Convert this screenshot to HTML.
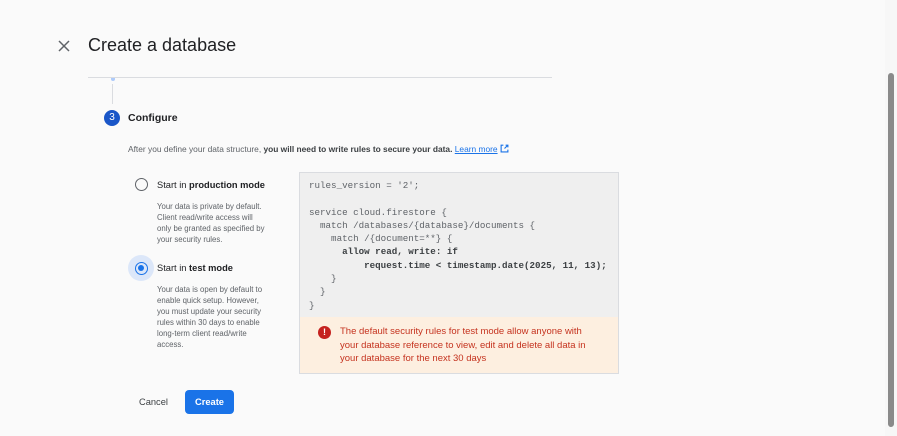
<!DOCTYPE html>
<html><head><style>
*{margin:0;padding:0;box-sizing:border-box}
body{width:897px;height:436px;background:#fafafa;font-family:"Liberation Sans",sans-serif;position:relative;overflow:hidden;color:#202124}
.abs{position:absolute}
.mono{font-family:"Liberation Mono",monospace}
</style></head><body>
<div class="abs" style="left:885px;top:0;width:12px;height:436px;background:#f7f7f7"></div>
<div class="abs" style="left:888px;top:73px;width:6px;height:354px;background:#8a8a8a;border-radius:3px"></div>
<svg class="abs" style="left:58px;top:40px" width="12" height="12" viewBox="0 0 12 12"><path d="M1 1L11 11M11 1L1 11" stroke="#5f6368" stroke-width="1.5"/></svg>
<div class="abs" style="left:88px;top:35px;font-size:18px;color:#202124">Create a database</div>
<div class="abs" style="left:88px;top:77px;width:464px;height:1px;background:#dadce0"></div>
<div class="abs" style="left:111px;top:78px;width:4px;height:3px;background:#aecbfa;border-radius:0 0 2px 2px"></div>
<div class="abs" style="left:112px;top:84px;width:1px;height:20px;background:#dadce0"></div>
<div class="abs" style="left:104px;top:110px;width:16px;height:16px;border-radius:50%;background:#1a56c8;color:#fff;font-size:10px;text-align:center;line-height:16px">3</div>
<div class="abs" style="left:128px;top:112px;font-size:10.5px;font-weight:bold">Configure</div>
<div class="abs" style="left:128px;top:144px;font-size:8.4px;color:#5f6368;white-space:nowrap">After you define your data structure, <b style="color:#3c4043">you will need to write rules to secure your data.</b> <span style="color:#1a73e8;text-decoration:underline">Learn more</span> <svg width="9" height="9" viewBox="0 0 8 8" style="vertical-align:-1px"><path d="M3 1H1V7H7V5M4 4L7 1M5 1H7V3" fill="none" stroke="#1a73e8" stroke-width="1"/></svg></div>
<div class="abs" style="left:135px;top:178px;width:13px;height:13px;border:1.5px solid #5f6368;border-radius:50%"></div>
<div class="abs" style="left:157px;top:180px;font-size:9.3px">Start in <b>production mode</b></div>
<div class="abs" style="left:157px;top:201px;font-size:7.8px;color:#5f6368;line-height:11px;width:112px">Your data is private by default. Client read/write access will only be granted as specified by your security rules.</div>
<div class="abs" style="left:128px;top:255px;width:26px;height:26px;border-radius:50%;background:#dce7f9"></div>
<div class="abs" style="left:135px;top:262px;width:13px;height:13px;border:1.5px solid #1a73e8;border-radius:50%"><div style="margin:2px;width:6px;height:6px;border-radius:50%;background:#1a73e8"></div></div>
<div class="abs" style="left:157px;top:263px;font-size:9.3px">Start in <b>test mode</b></div>
<div class="abs" style="left:157px;top:284px;font-size:7.8px;color:#5f6368;line-height:11px;width:112px">Your data is open by default to enable quick setup. However, you must update your security rules within 30 days to enable long-term client read/write access.</div>
<div class="abs mono" style="left:299px;top:172px;width:320px;height:145px;background:#efefef;border:1px solid #dadce0;border-bottom:none;font-size:9.2px;line-height:13.3px;color:#5f6368;padding:6px 0 0 9px;white-space:pre">rules_version = '2';

service cloud.firestore {
  match /databases/{database}/documents {
    match /{document=**} {
      <b style="color:#3c4043">allow read, write: if</b>
<b style="color:#3c4043">          request.time &lt; timestamp.date(2025, 11, 13);</b>
    }
  }
}</div>
<div class="abs" style="left:299px;top:317px;width:320px;height:57px;background:#fdefe0;border:1px solid #dadce0;border-top:none"></div>
<div class="abs" style="left:318px;top:326px;width:13px;height:13px;border-radius:50%;background:#c5221f;color:#fff;font-size:9px;font-weight:bold;text-align:center;line-height:13px">!</div>
<div class="abs" style="left:340px;top:325px;font-size:9.5px;color:#c5331f;line-height:13.5px;white-space:nowrap">The default security rules for test mode allow anyone with<br>your database reference to view, edit and delete all data in<br>your database for the next 30 days</div>
<div class="abs" style="left:139px;top:397px;font-size:9.3px;color:#3c4043">Cancel</div>
<div class="abs" style="left:185px;top:390px;width:49px;height:24px;background:#1a73e8;border-radius:4px;color:#fff;font-size:9.3px;font-weight:bold;text-align:center;line-height:24px">Create</div>
</body></html>
